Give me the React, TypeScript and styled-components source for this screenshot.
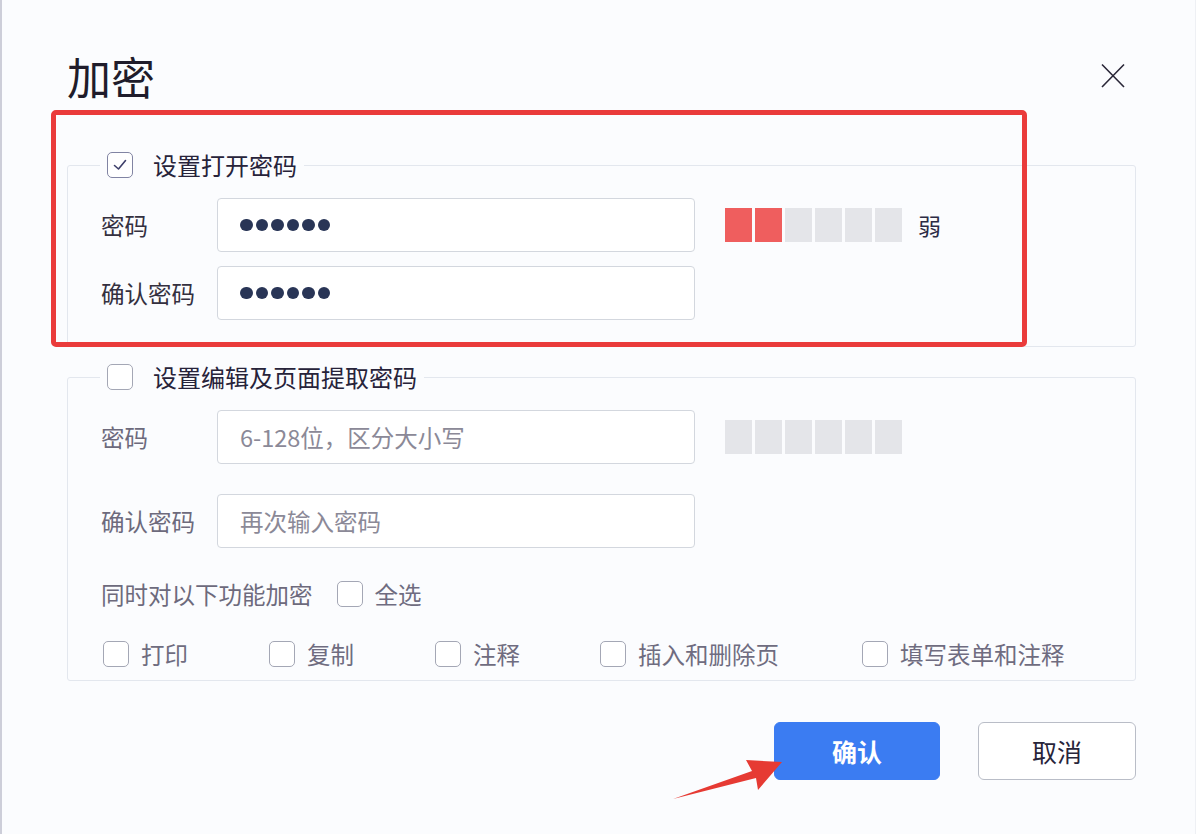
import * as React from 'react';
import styled, { createGlobalStyle } from 'styled-components';

const GlobalStyle = createGlobalStyle`
  html, body {
    margin: 0;
    padding: 0;
    background: #fbfcfe;
  }
  * {
    box-sizing: border-box;
  }
`;

const FONT = `"Noto Sans CJK SC", "Noto Sans", sans-serif`;

const Dialog = styled("div")`
  position: relative;
  width: 1196px;
  height: 834px;
  padding: 54px 59px 0 65px;
  background: #fbfcfe;
  border-left: 2px solid #cdced9;
  border-right: 1px solid #eef0f4;
  font-family: ${FONT};
  color: #2b2838;
  overflow: hidden;
`;

const Header = styled("div")`
  display: flex;
  align-items: center;
  justify-content: space-between;
  height: 44px;
  margin-bottom: 53px;
`;

const Title = styled("h1")`
  margin: 0;
  font-size: 44px;
  line-height: 44px;
  font-weight: 400;
  color: #1f1c2b;
`;

const CloseButton = styled("button")`
  width: 26px;
  height: 26px;
  margin-right: 10px;
  padding: 0;
  border: none;
  background: transparent;
  display: flex;
  align-items: center;
  justify-content: center;
  cursor: pointer;
`;

const Section = styled("fieldset")`
  margin: 0 0 16px 0;
  padding: 0;
  border: 1px solid #e3e7ee;
  border-radius: 3px;
  min-width: 0;
`;

const Legend = styled("legend")`
  margin-left: 32px;
  padding: 0 7px;
  height: 28px;
  display: flex;
  align-items: center;
  gap: 20px;
  font-size: 24px;
  line-height: 28px;
  color: #27233a;
`;

const SectionBody = styled("div")<{ $bottom: number }>`
  display: flex;
  flex-direction: column;
  padding: 19px 0 ${(p) => p.$bottom}px 33px;
`;

const Row = styled("div")<{ $mt?: number }>`
  display: flex;
  align-items: center;
  margin-top: ${(p) => p.$mt || 0}px;
`;

const Label = styled("span")<{ $muted?: boolean }>`
  width: 116px;
  flex: none;
  font-size: 23.5px;
  line-height: 28px;
  color: ${(p) => (p.$muted ? '#6d6a7c' : '#34303f')};
`;

const Field = styled("div")`
  width: 478px;
  height: 54px;
  flex: none;
  display: flex;
  align-items: center;
  gap: 3px;
  padding: 0 22px;
  background: #fff;
  border: 1px solid #d3d7de;
  border-radius: 4px;
`;

const Dot = styled("span")`
  width: 12.5px;
  height: 12.5px;
  border-radius: 50%;
  background: #293556;
`;

const Placeholder = styled("span")`
  font-size: 23.5px;
  color: #8b8997;
`;

const Meter = styled("div")`
  display: flex;
  align-items: center;
  margin-left: 30px;
  gap: 3px;
`;

const Bar = styled("span")<{ $on?: boolean }>`
  width: 27px;
  height: 34px;
  background: ${(p) => (p.$on ? '#ef5e5e' : '#e4e5e9')};
`;

const Strength = styled("span")`
  margin-left: 16px;
  font-size: 23px;
  color: #2b2b45;
`;

const Box = styled("span")<{ $checked?: boolean }>`
  width: 26px;
  height: 26px;
  flex: none;
  border: 1.5px solid ${(p) => (p.$checked ? '#8184a3' : '#a4a7b5')};
  border-radius: 5px;
  background: #fff;
  display: inline-flex;
  align-items: center;
  justify-content: center;
`;

const Feature = styled("label")`
  display: flex;
  align-items: center;
  gap: 12px;
  font-size: 23.5px;
  line-height: 28px;
  color: #6f6c80;
`;

const FeatureLine = styled("div")`
  display: flex;
  align-items: center;
  gap: 24px;
  margin-top: 32px;
  font-size: 23.5px;
  line-height: 28px;
  color: #6d6a7c;
`;

const Options = styled("div")`
  display: grid;
  grid-template-columns: 166px 166px 165px 262px auto;
  margin-top: 32px;
  padding-left: 2px;
`;

const Footer = styled("div")`
  display: flex;
  justify-content: flex-end;
  gap: 38px;
  margin-top: 41px;
`;

const Button = styled("button")<{ $primary?: boolean }>`
  height: 58px;
  width: ${(p) => (p.$primary ? 166 : 158)}px;
  border-radius: 6px;
  font-family: ${FONT};
  font-size: 25px;
  font-weight: ${(p) => (p.$primary ? 700 : 400)};
  color: ${(p) => (p.$primary ? '#ffffff' : '#28253a')};
  background: ${(p) => (p.$primary ? '#3b7cf2' : '#ffffff')};
  border: 1px solid ${(p) => (p.$primary ? '#3b7cf2' : '#b9bdc7')};
  cursor: pointer;
`;

const Highlight = styled("div")`
  position: absolute;
  left: 49px;
  top: 110px;
  width: 976px;
  height: 237px;
  border: 5px solid #ea3b3b;
  border-radius: 5px;
  pointer-events: none;
`;

const ArrowLayer = styled("svg")`
  position: absolute;
  left: 0;
  top: 0;
  pointer-events: none;
`;

const Check = ({ checked }: { checked?: boolean }) => (
  <Box $checked={checked}>
    {checked && (
      <svg width="16" height="16" viewBox="0 0 16 16">
        <path d="M2.5 8.5 L6.5 12 L13.5 3.5" fill="none" stroke="#3d3f6a" strokeWidth="1.6" strokeLinecap="round" strokeLinejoin="round" />
      </svg>
    )}
  </Box>
);

const StrengthMeter = ({ level }: { level: number }) => (
  <Meter>
    {[0, 1, 2, 3, 4, 5].map((i) => (
      <Bar key={i} $on={i < level} />
    ))}
  </Meter>
);

const Dots = () => (
  <Field>
    {[0, 1, 2, 3, 4, 5].map((i) => (
      <Dot key={i} />
    ))}
  </Field>
);

const features = ['打印', '复制', '注释', '插入和删除页', '填写表单和注释'];

const App = (): JSX.Element => {
  return (
    <>
      <GlobalStyle />
      <Dialog>
        <Header>
          <Title>加密</Title>
          <CloseButton>
            <svg width="26" height="26" viewBox="0 0 26 26">
              <path d="M2 1.5 L24 24 M24 1.5 L2 24" stroke="#2a2738" strokeWidth="1.6" />
            </svg>
          </CloseButton>
        </Header>

        <Section>
          <Legend>
            <Check checked />
            设置打开密码
          </Legend>
          <SectionBody $bottom={26}>
            <Row>
              <Label>密码</Label>
              <Dots />
              <StrengthMeter level={2} />
              <Strength>弱</Strength>
            </Row>
            <Row $mt={14}>
              <Label>确认密码</Label>
              <Dots />
            </Row>
          </SectionBody>
        </Section>

        <Section>
          <Legend>
            <Check />
            设置编辑及页面提取密码
          </Legend>
          <SectionBody $bottom={12}>
            <Row>
              <Label $muted>密码</Label>
              <Field>
                <Placeholder>6-128位，区分大小写</Placeholder>
              </Field>
              <StrengthMeter level={0} />
            </Row>
            <Row $mt={30}>
              <Label $muted>确认密码</Label>
              <Field>
                <Placeholder>再次输入密码</Placeholder>
              </Field>
            </Row>
            <FeatureLine>
              同时对以下功能加密
              <Feature>
                <Check />
                全选
              </Feature>
            </FeatureLine>
            <Options>
              {features.map((f) => (
                <Feature key={f}>
                  <Check />
                  {f}
                </Feature>
              ))}
            </Options>
          </SectionBody>
        </Section>

        <Footer>
          <Button $primary>确认</Button>
          <Button>取消</Button>
        </Footer>

        <Highlight />
        <ArrowLayer width="1196" height="834" viewBox="0 0 1196 834">
          <polygon points="671,799 750,771 744,760 780,762 756,790 754,778" fill="#e63a33" />
        </ArrowLayer>
      </Dialog>
    </>
  );
};

export default App;
